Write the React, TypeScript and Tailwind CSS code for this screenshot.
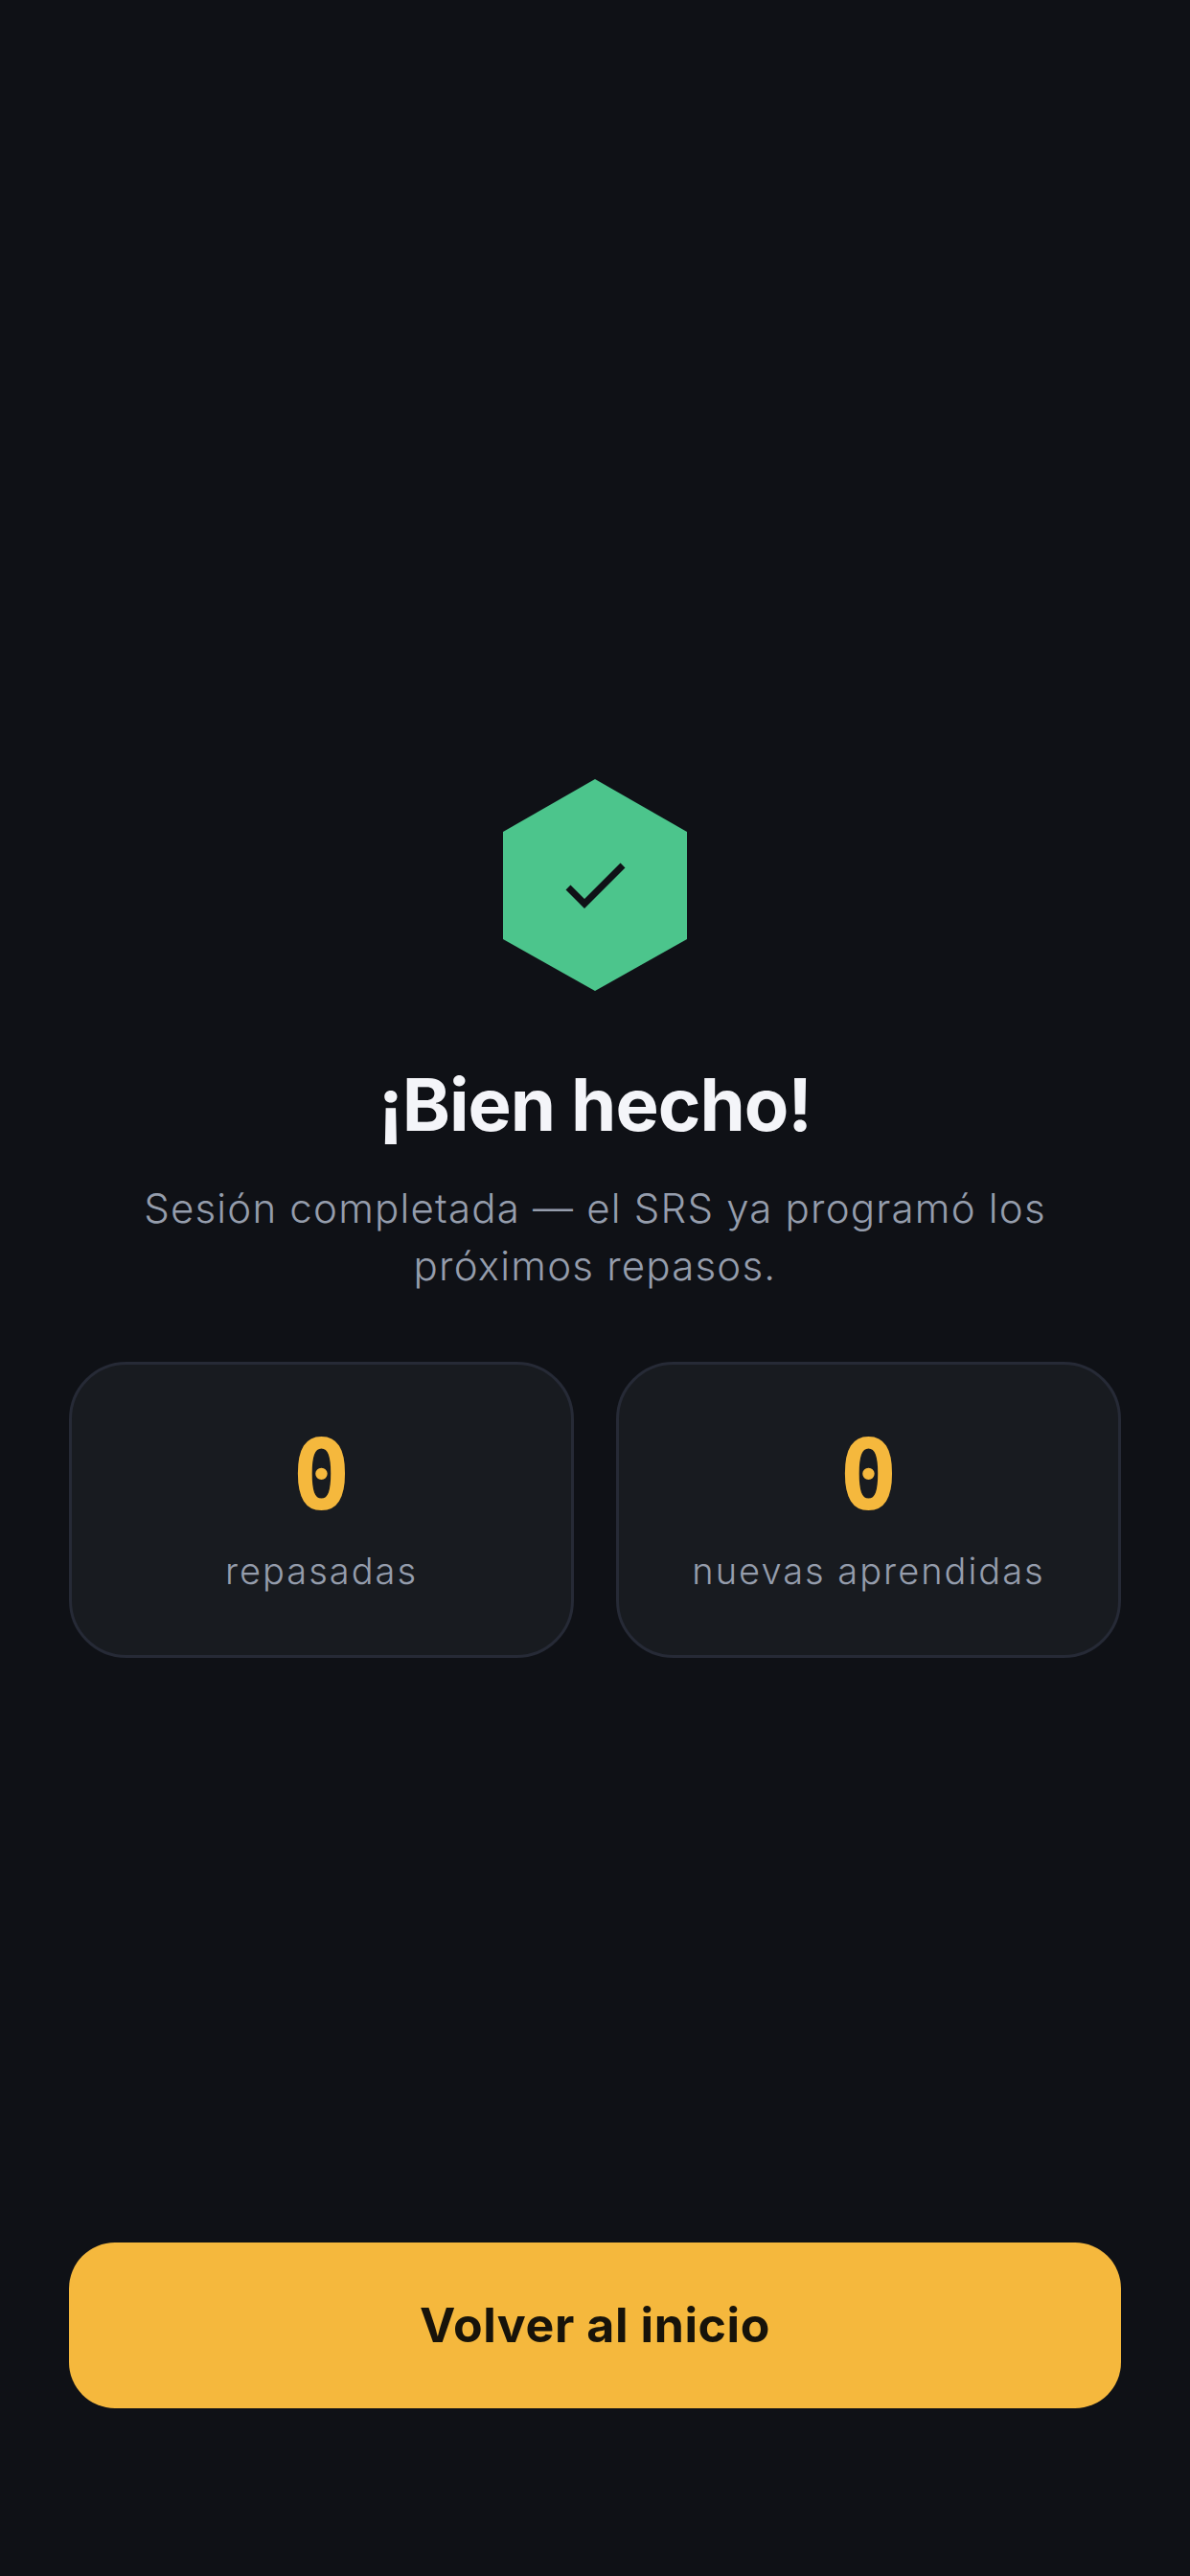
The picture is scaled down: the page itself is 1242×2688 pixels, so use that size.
const StatCard = ({ value, label }: { value: string; label: string }) => (
  <div className="flex-1 h-[309px] rounded-[60px] border-[3px] border-[#262a36] bg-[#181b20] flex flex-col items-center pt-[60px]">
    <div className="text-[102px] leading-[112px] font-bold text-[#f5b83d] font-['DejaVu_Sans_Mono',monospace]">
      {value}
    </div>
    <div className="mt-[19px] text-[38px] leading-[48px] tracking-[2px] font-light text-[#959dac]">
      {label}
    </div>
  </div>
);

export default function App() {
  return (
    <div className="w-[1242px] h-[2688px] bg-[#0f1116] flex flex-col font-['Inter',sans-serif]">
      <main className="flex-1 flex flex-col items-center justify-center px-[72px] pt-[203px]">
        {/* hexagon badge */}
        <svg width="192" height="221" viewBox="0 0 192 221" className="block">
          <polygon points="96,0 192,55 192,167 96,221 0,167 0,55" fill="#4cc58c" />
          <path d="M68 113 L85 130 L125 90" fill="none" stroke="#0f1116" strokeWidth="7" />
        </svg>

        <h1 className="mt-[72px] text-[76px] leading-[92px] font-bold tracking-[-1px] text-[#f4f5f9]">
          ¡Bien hecho!
        </h1>

        <p className="mt-[33px] w-[1000px] text-center text-[42px] leading-[60px] tracking-[1.2px] font-light text-[#959dac]">
          Sesión completada — el SRS ya programó los próximos repasos.
        </p>

        <div className="mt-[70px] w-full flex gap-[44px]">
          <StatCard value="0" label="repasadas" />
          <StatCard value="0" label="nuevas aprendidas" />
        </div>
      </main>

      <div className="px-[72px] pb-[175px]">
        <button className="w-full h-[173px] rounded-[48px] bg-[#f5b83d] text-[50px] tracking-[0.6px] font-bold text-[#17130a]">
          Volver al inicio
        </button>
      </div>
    </div>
  );
}
